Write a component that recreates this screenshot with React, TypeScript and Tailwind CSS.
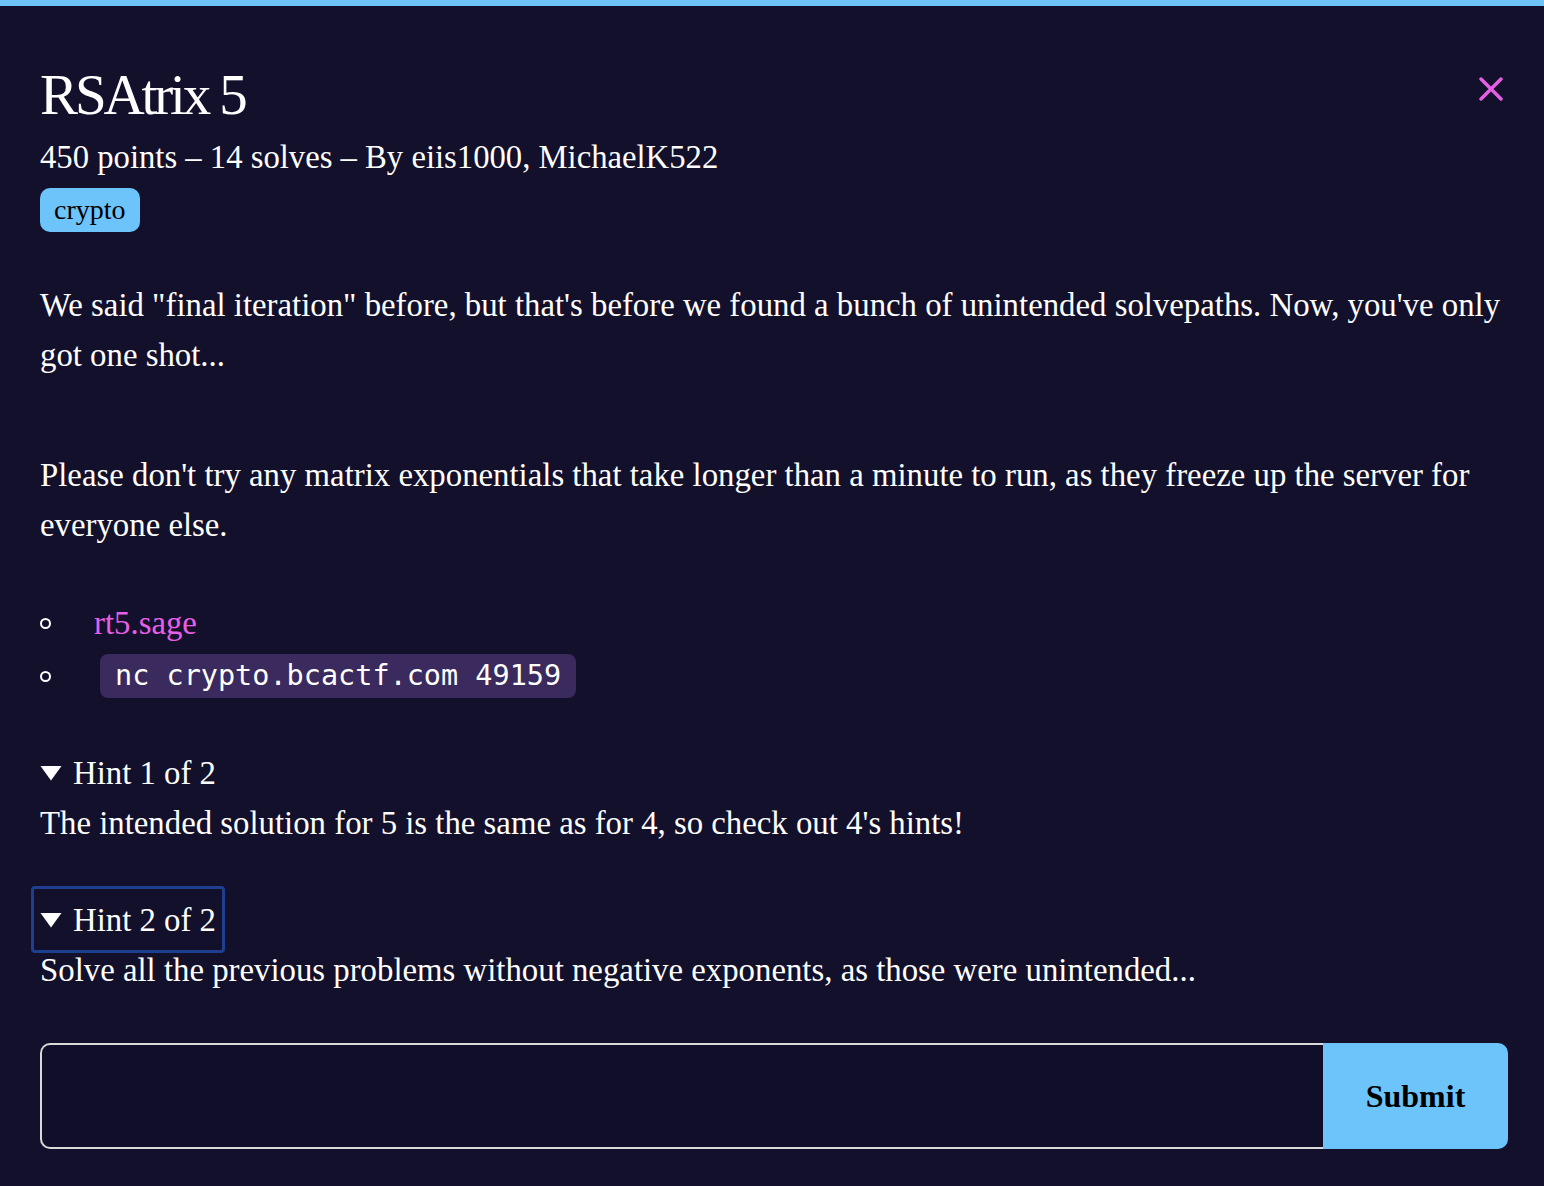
import React from "react";

function Tri() {
  return (
    <svg width="22" height="16" viewBox="0 0 22 16" className="shrink-0">
      <path d="M0.5 1 L21.5 1 L11 15.5 Z" fill="white" />
    </svg>
  );
}

export default function App() {
  const serif = { fontFamily: '"Liberation Serif", "Times New Roman", serif' };
  return (
    <div className="min-h-[1186px] w-full bg-[#13102b] text-white" style={serif}>
      <div className="h-[6px] w-full bg-[#6cc4fb]" />
      <div className="relative pl-[40px] pr-[36px]">
        <svg className="absolute right-[41px] top-[71px]" width="24" height="24" viewBox="0 0 24 24">
          <path d="M2 2 L22 22 M22 2 L2 22" stroke="#e75fe6" strokeWidth="3.4" strokeLinecap="round" />
        </svg>
        <h1 className="pt-[57px] text-[57px] leading-[64px] tracking-[-0.055em]">RSAtrix 5</h1>
        <div className="mt-[10px] text-[32.7px] leading-[40px]">450 points – 14 solves – By eiis1000, MichaelK522</div>
        <div className="mt-[11px] flex">
          <span className="inline-block h-[44px] rounded-[10px] bg-[#6cc4fb] px-[14px] text-[28px] leading-[44px] text-black">crypto</span>
        </div>
        <div className="-mr-[10px] mt-[48px] text-[32.8px] leading-[50px]">
          <p>We said "final iteration" before, but that's before we found a bunch of unintended solvepaths. Now, you've only got one shot...</p>
          <p className="mt-[70px]">Please don't try any matrix exponentials that take longer than a minute to run, as they freeze up the server for everyone else.</p>
          <ul className="mt-[48px]">
            <li className="flex h-[50px] items-center">
              <span className="inline-block h-[11px] w-[11px] rounded-full border-[2px] border-white" />
              <span className="ml-[43px] text-[#e75fe6]">rt5.sage</span>
            </li>
            <li className="mt-[3px] flex h-[50px] items-center">
              <span className="inline-block h-[11px] w-[11px] rounded-full border-[2px] border-white" />
              <span
                className="ml-[49px] inline-block h-[44px] rounded-[8px] bg-[#3a2a5e] px-[15px] text-[28.5px] leading-[44px]"
                style={{ fontFamily: '"DejaVu Sans Mono", monospace' }}
              >
                nc crypto.bcactf.com 49159
              </span>
            </li>
          </ul>
          <div className="mt-[47px]">
            <div className="flex h-[50px] items-center">
              <Tri />
              <span className="ml-[11px]">Hint 1 of 2</span>
            </div>
            <div>The intended solution for 5 is the same as for 4, so check out 4's hints!</div>
          </div>
          <div className="mt-[38px]">
            <div className="-ml-[9px] inline-flex h-[67px] items-center rounded-[4px] border-[3px] border-[#1e3f8f] pl-[6px] pr-[6px]">
              <Tri />
              <span className="ml-[11px]">Hint 2 of 2</span>
            </div>
            <div className="-mt-[8px]">Solve all the previous problems without negative exponents, as those were unintended...</div>
          </div>
        </div>
        <div className="mt-[48px] flex h-[106px]">
          <input className="h-full flex-1 rounded-l-[10px] border-[2px] border-r-0 border-[#d9d9d9] bg-[#110e29] outline-none" />
          <button className="h-full w-[185px] rounded-r-[10px] bg-[#6cc4fb] text-[32px] font-bold text-black">Submit</button>
        </div>
      </div>
    </div>
  );
}
